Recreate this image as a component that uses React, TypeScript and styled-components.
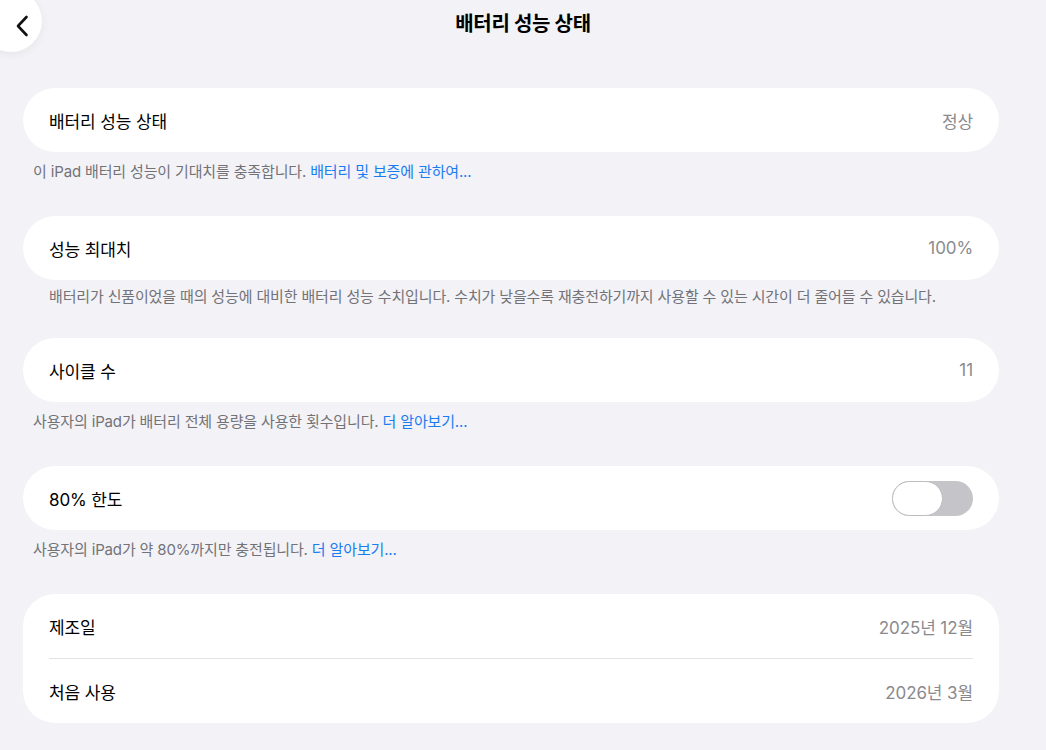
import styled, { createGlobalStyle } from 'styled-components';

const GlobalStyle = createGlobalStyle`
  html, body {
    margin: 0;
    padding: 0;
    background: #f2f2f7;
  }
  body {
    font-family: Inter, "Noto Sans CJK KR", "Noto Sans", sans-serif;
    -webkit-font-smoothing: antialiased;
  }
`;

const Page = styled.div`
  position: relative;
  width: 1046px;
  height: 750px;
  overflow: hidden;
  background: #f2f2f7;
  color: #000;
`;

const BackButton = styled.button`
  position: absolute;
  left: -20px;
  top: -10px;
  width: 62px;
  height: 62px;
  border: none;
  border-radius: 50%;
  background: #fff;
  box-shadow: 0 2px 10px rgba(0, 0, 0, 0.06);
  display: flex;
  align-items: center;
  justify-content: center;
  padding: 10px 0 0 22px;
  cursor: pointer;
`;

const Header = styled.header`
  height: 45px;
  display: flex;
  align-items: center;
  justify-content: center;
`;

const Title = styled.h1`
  margin: 0;
  font-size: 20px;
  font-weight: 700;
  letter-spacing: -0.3px;
`;

const Content = styled.main`
  padding: 43px 47px 0 23px;
`;

const Card = styled.section`
  background: #fff;
  border-radius: 32px;
  padding: 0 26px;
`;

const Row = styled.div`
  height: 64px;
  display: flex;
  align-items: center;
  justify-content: space-between;
`;

const Label = styled.span`
  font-size: 17px;
  letter-spacing: -0.1px;
`;

const Value = styled.span`
  font-size: 17px;
  color: #8a8a8e;
  letter-spacing: -0.1px;
`;

const Divider = styled.div`
  height: 1px;
  background: #e3e3e8;
`;

const Footer = styled.p<{ $indent?: boolean; $tight?: boolean }>`
  margin: 0;
  padding: ${({ $tight }) => ($tight ? '8px 0 32px' : '11px 0 35px')};
  padding-left: ${({ $indent }) => ($indent ? '26px' : '10px')};
  font-size: 15px;
  line-height: 18px;
  color: #727277;
  letter-spacing: -0.15px;
  white-space: nowrap;
`;

const Link = styled.a`
  color: #1b7cf0;
  text-decoration: none;
`;

const Switch = styled.div`
  width: 81px;
  height: 35px;
  border-radius: 18px;
  background: #c5c5c9;
  position: relative;
`;

const Knob = styled.div`
  position: absolute;
  left: 0;
  top: 0;
  width: 51px;
  height: 35px;
  box-sizing: border-box;
  border-radius: 18px;
  background: #fff;
  border: 1.5px solid #bdbdc0;
`;

export default function App() {
  return (
    <>
      <GlobalStyle />
      <Page>
        <BackButton aria-label="뒤로">
          <svg width="14" height="22" viewBox="0 0 14 22" fill="none">
            <path d="M11.5 2 L3 11 L11.5 20" stroke="#111" strokeWidth="2.6" strokeLinecap="round" strokeLinejoin="round" />
          </svg>
        </BackButton>
        <Header>
          <Title>배터리 성능 상태</Title>
        </Header>
        <Content>
          <Card>
            <Row>
              <Label>배터리 성능 상태</Label>
              <Value>정상</Value>
            </Row>
          </Card>
          <Footer>
            이 iPad 배터리 성능이 기대치를 충족합니다. <Link>배터리 및 보증에 관하여...</Link>
          </Footer>

          <Card>
            <Row>
              <Label>성능 최대치</Label>
              <Value>100%</Value>
            </Row>
          </Card>
          <Footer $indent $tight>
            배터리가 신품이었을 때의 성능에 대비한 배터리 성능 수치입니다. 수치가 낮을수록 재충전하기까지 사용할 수 있는 시간이 더 줄어들 수 있습니다.
          </Footer>

          <Card>
            <Row>
              <Label>사이클 수</Label>
              <Value>11</Value>
            </Row>
          </Card>
          <Footer>
            사용자의 iPad가 배터리 전체 용량을 사용한 횟수입니다. <Link>더 알아보기...</Link>
          </Footer>

          <Card>
            <Row>
              <Label>80% 한도</Label>
              <Switch>
                <Knob />
              </Switch>
            </Row>
          </Card>
          <Footer>
            사용자의 iPad가 약 80%까지만 충전됩니다. <Link>더 알아보기...</Link>
          </Footer>

          <Card>
            <Row>
              <Label>제조일</Label>
              <Value>2025년 12월</Value>
            </Row>
            <Divider />
            <Row>
              <Label>처음 사용</Label>
              <Value>2026년 3월</Value>
            </Row>
          </Card>
        </Content>
      </Page>
    </>
  );
}
